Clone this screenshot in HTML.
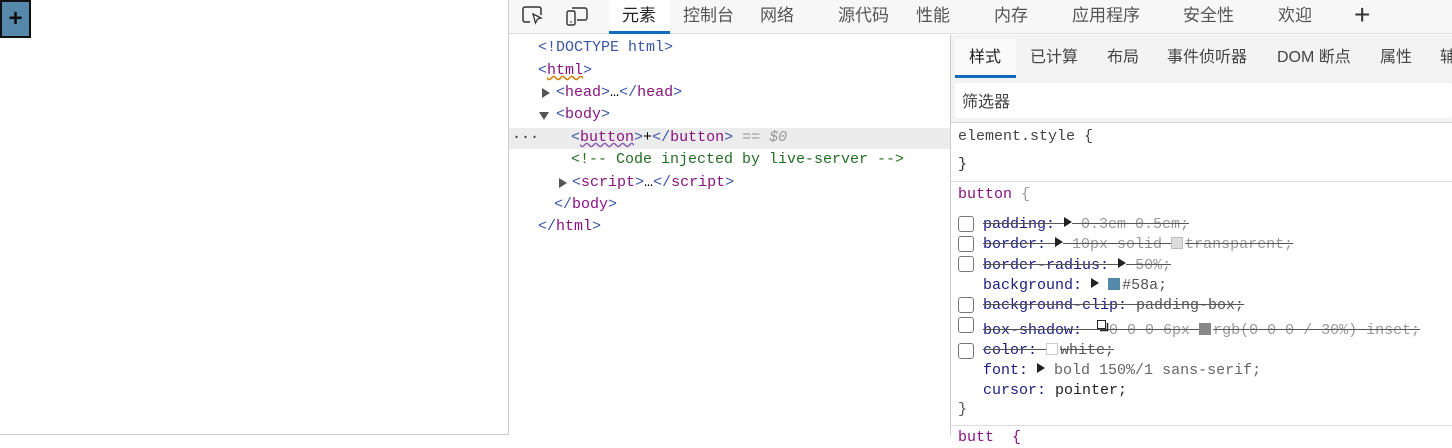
<!DOCTYPE html>
<html><head><meta charset="utf-8"><style>
*{margin:0;padding:0;box-sizing:border-box}
body{width:1452px;height:435px;overflow:hidden;background:#fff;position:relative;font-family:"Liberation Sans","Noto Sans CJK SC",sans-serif}
.a{position:absolute;white-space:pre}
.m{font-family:"Liberation Mono",monospace;font-size:15px;line-height:20px}
.t{font-size:17px;color:#555;top:5px;line-height:22px}
.s{font-size:16px;color:#444;line-height:22px}
.tg{color:#881280}.br{color:#3955a3}.cm{color:#236e25}.g{color:#999}
.pn{color:#1d1d80}.v{color:#333}.x{text-decoration:line-through;color:#555}
.cb{position:absolute;left:958px;width:16px;height:16px;border:1.5px solid #777;border-radius:3px;background:#fff}
.tri{display:inline-block;width:0;height:0;border-left:8px solid #222;border-top:5px solid transparent;border-bottom:5px solid transparent;vertical-align:1px}
.dt{position:absolute;width:0;height:0}
.sw{display:inline-block;width:12px;height:12px;vertical-align:-1px;margin-right:2px}
</style></head><body>
<div class="a" style="left:0;top:0;width:31px;height:38px;background:#58a;border:2px solid #111;font:bold 24px/34px 'Liberation Sans',sans-serif;text-align:center;color:#111">+</div>
<div class="a" style="left:0;top:434px;width:1452px;height:1px;background:#ccc"></div>
<div class="a" style="left:508px;top:0;width:944px;height:435px;background:#fff;border-left:1px solid #ccc"></div>
<div class="a" style="left:509px;top:0;width:943px;height:34px;background:#f7f7f7;border-bottom:1px solid #e0e0e0"></div>
<div class="a" style="left:609px;top:0;width:61px;height:34px;background:#fff;border-bottom:3px solid #0f6cbd"></div>
<svg class="a" style="left:521px;top:5px" width="26" height="22" viewBox="0 0 26 22"><path d="M9 17H4a2 2 0 0 1-2-2V4a2 2 0 0 1 2-2h14a2 2 0 0 1 2 2v6" fill="none" stroke="#333" stroke-width="1.5"/><path d="M12 9l8 4-3.5 1-2 4z" fill="#fff" stroke="#333" stroke-width="1.3"/></svg>
<svg class="a" style="left:565px;top:5px" width="26" height="22" viewBox="0 0 26 22"><rect x="2" y="6" width="8" height="14" rx="1.5" fill="none" stroke="#333" stroke-width="1.4"/><path d="M7 3h13a2 2 0 0 1 2 2v8a2 2 0 0 1-2 2h-8" fill="none" stroke="#333" stroke-width="1.4"/><path d="M5 17h2" stroke="#333"/></svg>
<div class="a t" style="left:622px;color:#222">元素</div>
<div class="a t" style="left:683px">控制台</div>
<div class="a t" style="left:760px">网络</div>
<div class="a t" style="left:838px">源代码</div>
<div class="a t" style="left:916px">性能</div>
<div class="a t" style="left:994px">内存</div>
<div class="a t" style="left:1072px">应用程序</div>
<div class="a t" style="left:1183px">安全性</div>
<div class="a t" style="left:1278px">欢迎</div>
<div class="a" style="left:1354px;top:2px;font-size:28px;line-height:26px;color:#333;font-weight:300">+</div>
<div class="a" style="left:509px;top:128px;width:441px;height:21px;background:#ececec"></div>
<div class="a m" style="left:538px;top:38px"><span class="br">&lt;!DOCTYPE html&gt;</span></div>
<div class="a m" style="left:538px;top:61px"><span class="br">&lt;</span><span class="tg" style="text-decoration:underline wavy #d08000">html</span><span class="br">&gt;</span></div>
<div class="dt" style="left:542px;top:88px;border-left:8px solid #555;border-top:5px solid transparent;border-bottom:5px solid transparent"></div>
<div class="a m" style="left:556px;top:83px"><span class="br">&lt;</span><span class="tg">head</span><span class="br">&gt;</span>…<span class="br">&lt;/</span><span class="tg">head</span><span class="br">&gt;</span></div>
<div class="dt" style="left:539px;top:112px;border-top:8px solid #555;border-left:5px solid transparent;border-right:5px solid transparent"></div>
<div class="a m" style="left:556px;top:105px"><span class="br">&lt;</span><span class="tg">body</span><span class="br">&gt;</span></div>
<div class="a m" style="left:512px;top:128px;color:#333">···</div>
<div class="a m" style="left:571px;top:128px"><span class="br">&lt;</span><span class="tg" style="text-decoration:underline wavy #9060b0">button</span><span class="br">&gt;</span>+<span class="br">&lt;/</span><span class="tg">button</span><span class="br">&gt;</span> <span class="g">== <i>$0</i></span></div>
<div class="a m cm" style="left:571px;top:150px">&lt;!-- Code injected by live-server --&gt;</div>
<div class="dt" style="left:559px;top:178px;border-left:8px solid #555;border-top:5px solid transparent;border-bottom:5px solid transparent"></div>
<div class="a m" style="left:572px;top:173px"><span class="br">&lt;</span><span class="tg">script</span><span class="br">&gt;</span>…<span class="br">&lt;/</span><span class="tg">script</span><span class="br">&gt;</span></div>
<div class="a m" style="left:554px;top:195px"><span class="br">&lt;/</span><span class="tg">body</span><span class="br">&gt;</span></div>
<div class="a m" style="left:538px;top:217px"><span class="br">&lt;/</span><span class="tg">html</span><span class="br">&gt;</span></div>
<div class="a" style="left:950px;top:35px;width:502px;height:400px;border-left:1px solid #ccc"></div>
<div class="a" style="left:951px;top:35px;width:501px;height:88px;background:#f3f3f3;border-bottom:1px solid #d6d6d6"></div>
<div class="a" style="left:955px;top:39px;width:61px;height:39px;background:#fafafa;border-bottom:3px solid #0f6cbd"></div>
<div class="a s" style="left:969px;top:47px;color:#222">样式</div>
<div class="a s" style="left:1030px;top:47px">已计算</div>
<div class="a s" style="left:1107px;top:47px">布局</div>
<div class="a s" style="left:1167px;top:47px">事件侦听器</div>
<div class="a s" style="left:1277px;top:47px">DOM 断点</div>
<div class="a s" style="left:1380px;top:47px">属性</div>
<div class="a s" style="left:1440px;top:47px">辅</div>
<div class="a" style="left:955px;top:83px;width:497px;height:35px;background:#fff;border-radius:3px"></div>
<div class="a s" style="left:962px;top:92px;color:#444">筛选器</div>
<div class="a m v" style="left:958px;top:127px;color:#444">element.style {</div>
<div class="a m v" style="left:958px;top:155px">}</div>
<div class="a" style="left:951px;top:181px;width:501px;height:1px;background:#ddd"></div>
<div class="a m" style="left:958px;top:185px"><span class="tg">button</span> <span class="g">{</span></div>
<div class="cb" style="top:216px"></div>
<div class="a m x" style="left:983px;top:215px"><span class="pn">padding:</span> <span class="tri"></span> <span class="g">0.3em 0.5em;</span></div>
<div class="cb" style="top:236px"></div>
<div class="a m x" style="left:983px;top:235px"><span class="pn">border:</span> <span class="tri"></span> <span class="g">10px solid <span class="sw" style="background:#ddd;border:1px solid #bbb"></span>transparent;</span></div>
<div class="cb" style="top:256px"></div>
<div class="a m x" style="left:983px;top:256px"><span class="pn">border-radius:</span> <span class="tri"></span> <span class="g">50%;</span></div>
<div class="a m" style="left:983px;top:276px"><span class="pn">background:</span> <span class="tri"></span> <span class="sw" style="background:#58a"></span><span style="color:#555">#58a;</span></div>
<div class="cb" style="top:297px"></div>
<div class="a m x" style="left:983px;top:296px"><span class="pn">background-clip:</span> padding-box;</div>
<div class="cb" style="top:317px"></div>
<div class="a m x" style="left:983px;top:321px"><span class="pn">box-shadow:</span>   <span class="g">0 0 0 6px <span class="sw" style="background:#888"></span>rgb(0 0 0 / 30%) inset;</span></div>
<svg class="a" style="left:1097px;top:320px" width="13" height="13" viewBox="0 0 13 13"><rect x="0.5" y="0.5" width="8" height="8" fill="#fff" stroke="#222"/><path d="M10.5 3v7.5H3" fill="none" stroke="#222" stroke-width="1.5"/></svg>
<div class="cb" style="top:343px"></div>
<div class="a m x" style="left:983px;top:341px"><span class="pn">color:</span> <span class="sw" style="background:#fff;border:1px solid #ccc"></span>white;</div>
<div class="a m" style="left:983px;top:361px"><span class="pn">font:</span> <span class="tri"></span> <span style="color:#666">bold 150%/1 sans-serif;</span></div>
<div class="a m" style="left:983px;top:381px"><span class="pn">cursor:</span> <span style="color:#222">pointer;</span></div>
<div class="a m" style="left:958px;top:400px;color:#555">}</div>
<div class="a" style="left:951px;top:425px;width:501px;height:1px;background:#ddd"></div>
<div class="a m tg" style="left:958px;top:428px">butt  {</div>
</body></html>
